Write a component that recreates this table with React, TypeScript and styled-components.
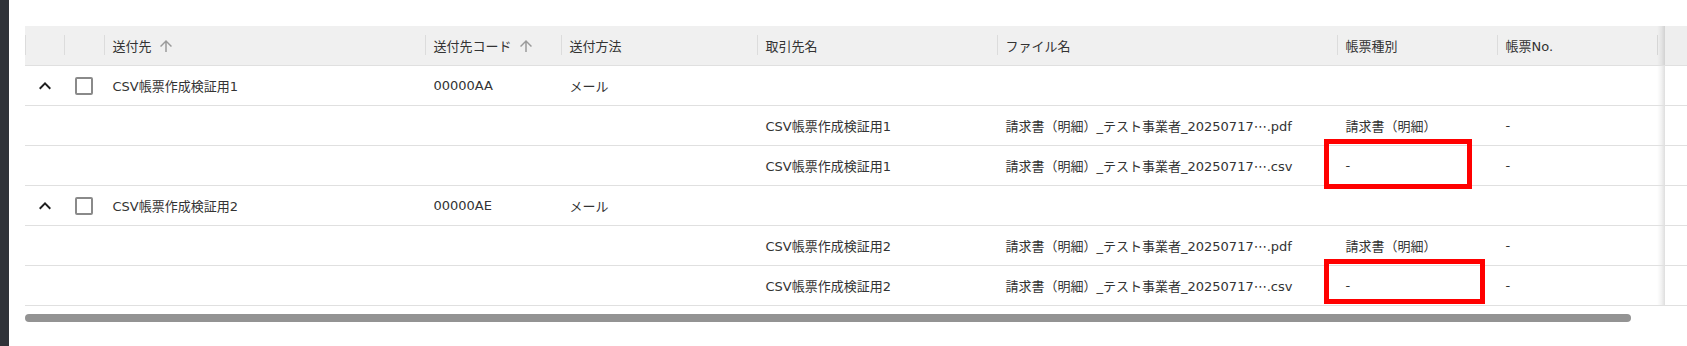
import styled, { createGlobalStyle } from "styled-components";

const GlobalStyle = createGlobalStyle`
  html, body {
    margin: 0;
    padding: 0;
    background: #fff;
  }
  body {
    font-family: "DejaVu Sans", "Noto Sans CJK JP", sans-serif;
    font-size: 13px;
    color: #333;
  }
`;

// expand, check, 送付先, コード, 方法, 取引先名, ファイル名, 帳票種別, 帳票No., (next col edge), pinned
const COLUMNS = "39px 40px 321px 136px 196px 240px 340px 160px 160px 8px 1fr";

const Page = styled.div`
  display: flex;
  width: 1687px;
  height: 346px;
  overflow: hidden;
`;

const SideBar = styled.div`
  flex: none;
  width: 9px;
  background: #2f3238;
`;

const Main = styled.div`
  flex: 1;
  min-width: 0;
  padding: 26px 0 0 16px;
  overflow: hidden;
`;

const Table = styled.div`
  display: flex;
  flex-direction: column;
`;

const Row = styled.div<{ $header?: boolean }>`
  display: grid;
  grid-template-columns: ${COLUMNS};
  height: 39px;
  border-bottom: 1px solid #e0e0e0;
  background: ${(p) => (p.$header ? "#f0f0f0" : "#fff")};
`;

const HeaderCell = styled.div`
  position: relative;
  display: flex;
  align-items: center;
  padding-left: 8.5px;
  white-space: nowrap;
  overflow: hidden;
  color: #333;

  &::before {
    content: "";
    position: absolute;
    left: 0;
    top: 9px;
    width: 1px;
    height: 20px;
    background: #dcdcdc;
  }
`;

const Cell = styled.div<{ $center?: boolean }>`
  position: relative;
  display: flex;
  align-items: center;
  justify-content: ${(p) => (p.$center ? "center" : "flex-start")};
  padding-left: ${(p) => (p.$center ? "0" : "8.5px")};
  white-space: nowrap;
  color: #333;
`;

const EdgeCell = styled.div<{ $header?: boolean }>`
  position: relative;
  background: linear-gradient(to right, rgba(0, 0, 0, 0) 0%, rgba(0, 0, 0, 0.05) 55%, rgba(0, 0, 0, 0.13) 100%),
    ${(p) => (p.$header ? "#f0f0f0" : "#fff")};

  &::before {
    content: ${(p) => (p.$header ? '""' : "none")};
    position: absolute;
    left: 0;
    top: 9px;
    width: 1px;
    height: 20px;
    background: #d6d6d6;
  }
`;

const PinnedCell = styled.div<{ $header?: boolean }>`
  background: ${(p) => (p.$header ? "#eeeeee" : "#fff")};
`;

const SortIcon = styled.svg`
  width: 18px;
  height: 18px;
  margin-left: 5px;
  fill: #9a9a9a;
  flex: none;
`;

const ExpandIcon = styled.svg`
  width: 24px;
  height: 24px;
  fill: #1f1f1f;
  margin-left: 1px;
`;

const CheckBox = styled.span`
  box-sizing: border-box;
  width: 18px;
  height: 18px;
  border: 2px solid #8a8a8a;
  border-radius: 2px;
  background: #fff;
`;

const Highlight = styled.div<{ $w: number; $h: number }>`
  position: absolute;
  left: -13px;
  top: -7px;
  box-sizing: border-box;
  width: ${(p) => p.$w}px;
  height: ${(p) => p.$h}px;
  border: 5px solid #ff0000;
  pointer-events: none;
`;

const ScrollTrack = styled.div`
  margin-top: 8px;
  height: 8px;
`;

const ScrollThumb = styled.div<{ $w: number }>`
  width: ${(p) => p.$w}px;
  height: 8px;
  border-radius: 4px;
  background: #939393;
`;

function ArrowUp() {
  return (
    <SortIcon viewBox="0 0 24 24">
      <path d="M4 12l1.41 1.41L11 7.83V20h2V7.83l5.58 5.59L20 12l-8-8-8 8z" />
    </SortIcon>
  );
}

function ExpandLess() {
  return (
    <ExpandIcon viewBox="0 0 24 24">
      <path d="M12 8l-6 6 1.41 1.41L12 10.83l4.59 4.58L18 14z" />
    </ExpandIcon>
  );
}

interface Child {
  partner: string;
  file: string;
  kind: string;
  no: string;
  box?: { w: number; h: number };
}

interface Group {
  name: string;
  code: string;
  method: string;
  children: Child[];
}

const groups: Group[] = [
  {
    name: "CSV帳票作成検証用1",
    code: "00000AA",
    method: "メール",
    children: [
      { partner: "CSV帳票作成検証用1", file: "請求書（明細）_テスト事業者_20250717⋯.pdf", kind: "請求書（明細）", no: "-" },
      { partner: "CSV帳票作成検証用1", file: "請求書（明細）_テスト事業者_20250717⋯.csv", kind: "-", no: "-", box: { w: 148, h: 50 } },
    ],
  },
  {
    name: "CSV帳票作成検証用2",
    code: "00000AE",
    method: "メール",
    children: [
      { partner: "CSV帳票作成検証用2", file: "請求書（明細）_テスト事業者_20250717⋯.pdf", kind: "請求書（明細）", no: "-" },
      { partner: "CSV帳票作成検証用2", file: "請求書（明細）_テスト事業者_20250717⋯.csv", kind: "-", no: "-", box: { w: 161, h: 45 } },
    ],
  },
];

function HeaderRow() {
  return (
    <Row $header>
      <HeaderCell />
      <HeaderCell />
      <HeaderCell>
        送付先
        <ArrowUp />
      </HeaderCell>
      <HeaderCell>
        送付先コード
        <ArrowUp />
      </HeaderCell>
      <HeaderCell>送付方法</HeaderCell>
      <HeaderCell>取引先名</HeaderCell>
      <HeaderCell>ファイル名</HeaderCell>
      <HeaderCell>帳票種別</HeaderCell>
      <HeaderCell>帳票No.</HeaderCell>
      <EdgeCell $header />
      <PinnedCell $header />
    </Row>
  );
}

function GroupRows({ group }: { group: Group }) {
  return (
    <>
      <Row>
        <Cell $center>
          <ExpandLess />
        </Cell>
        <Cell $center>
          <CheckBox />
        </Cell>
        <Cell>{group.name}</Cell>
        <Cell>{group.code}</Cell>
        <Cell>{group.method}</Cell>
        <Cell />
        <Cell />
        <Cell />
        <Cell />
        <EdgeCell />
        <PinnedCell />
      </Row>
      {group.children.map((c, i) => (
        <Row key={i}>
          <Cell />
          <Cell />
          <Cell />
          <Cell />
          <Cell />
          <Cell>{c.partner}</Cell>
          <Cell>{c.file}</Cell>
          <Cell>
            {c.kind}
            {c.box && <Highlight $w={c.box.w} $h={c.box.h} />}
          </Cell>
          <Cell>{c.no}</Cell>
          <EdgeCell />
          <PinnedCell />
        </Row>
      ))}
    </>
  );
}

export default function App() {
  return (
    <>
      <GlobalStyle />
      <Page>
        <SideBar />
        <Main>
          <Table>
            <HeaderRow />
            {groups.map((g) => (
              <GroupRows key={g.code} group={g} />
            ))}
          </Table>
          <ScrollTrack>
            <ScrollThumb $w={1606} />
          </ScrollTrack>
        </Main>
      </Page>
    </>
  );
}
